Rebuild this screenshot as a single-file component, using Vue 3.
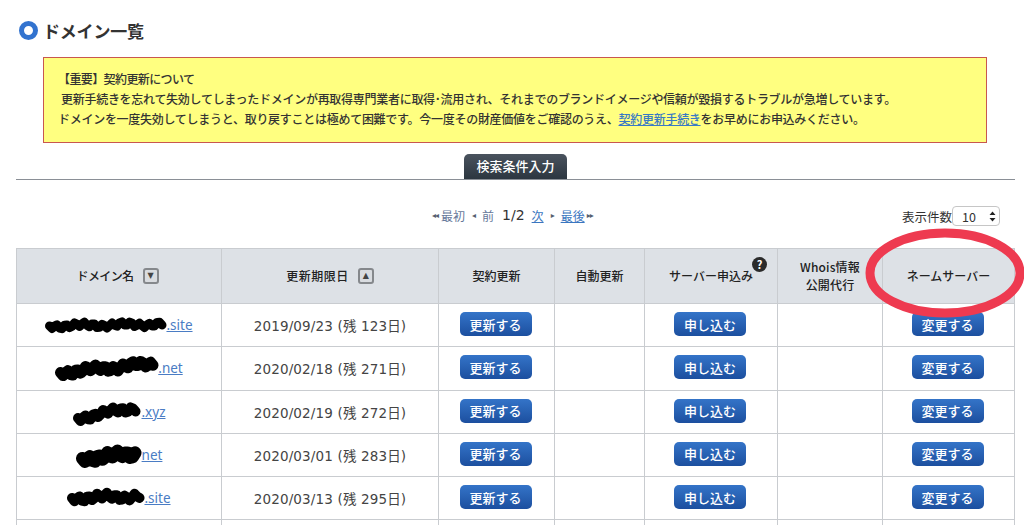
<template>
  <div class="page">
    <h1 class="title"><span class="title-mark"></span>ドメイン一覧</h1>

    <div class="notice">
      <p class="lead">【重要】契約更新について</p>
      <p class="indent">更新手続きを忘れて失効してしまったドメインが再取得専門業者に取得･流用され、それまでのブランドイメージや信頼が毀損するトラブルが急増しています。</p>
      <p>ドメインを一度失効してしまうと、取り戻すことは極めて困難です。今一度その財産価値をご確認のうえ、<a href="#">契約更新手続き</a>をお早めにお申込みください。</p>
    </div>

    <div class="tab-line">
      <div class="tab">検索条件入力</div>
    </div>

    <div class="pager-row">
      <div class="pager">
        <span class="arrow">◂◂</span>
        <span class="muted first">最初</span>
        <span class="arrow single">◂</span>
        <span class="muted prev">前</span>
        <span class="count">1/2</span>
        <a href="#" class="next">次</a>
        <span class="arrow single">▸</span>
        <a href="#" class="last">最後</a>
        <span class="arrow">▸▸</span>
      </div>
      <div class="per-page">
        <span>表示件数</span>
        <div class="select">10
          <svg width="7" height="11" viewBox="0 0 7 11"><path d="M3.5 0.5 6.5 4H.5zM3.5 10.5 .5 7h6z" fill="#222" /></svg>
        </div>
      </div>
    </div>

    <table class="domains">
      <colgroup>
        <col v-for="w in colWidths" :key="w.id" :style="{ width: w.px + 'px' }" />
      </colgroup>
      <thead>
        <tr>
          <th><span class="sortable first-sort"><span class="label-tight">ドメイン名</span><span class="sort">▼</span></span></th>
          <th><span class="sortable"><span class="label-wide">更新期限日</span><span class="sort">▲</span></span></th>
          <th>契約更新</th>
          <th>自動更新</th>
          <th class="help-cell">サーバー申込み<span class="help">?</span></th>
          <th class="whois">Whois情報<br />公開代行</th>
          <th>ネームサーバー</th>
        </tr>
      </thead>
      <tbody>
        <tr v-for="row in rows" :key="row.date">
          <td>
            <span class="domain">
              <svg class="scribble" :width="row.w" height="28" :viewBox="`0 0 ${row.w} 28`">
                <path :d="scribble(row)" fill="none" stroke="#000" :stroke-width="row.sw" stroke-linecap="round" stroke-linejoin="round" />
              </svg><a href="#">{{ row.tld }}</a>
            </span>
          </td>
          <td class="date">{{ row.date }} (残 {{ row.left }}日)</td>
          <td><button class="btn">更新する</button></td>
          <td></td>
          <td><button class="btn">申し込む</button></td>
          <td></td>
          <td><button class="btn">変更する</button></td>
        </tr>
        <tr class="cut">
          <td></td><td></td><td></td><td></td><td></td><td></td><td></td>
        </tr>
      </tbody>
    </table>

    <svg class="circle" width="170" height="100" viewBox="0 0 170 100">
      <ellipse cx="83" cy="48" rx="75" ry="40" fill="none" stroke="#ee3a50" stroke-width="9" />
    </svg>
  </div>
</template>

<script setup>
const colWidths = [
  { id: 'domain', px: 205 },
  { id: 'date', px: 217 },
  { id: 'renew', px: 116 },
  { id: 'auto', px: 90 },
  { id: 'server', px: 133 },
  { id: 'whois', px: 105 },
  { id: 'ns', px: 132 }
]

const rows = [
  { tld: '.site', date: '2019/09/23', left: 123, w: 122, y0: 15, y1: 13, amp: 3, sw: 9 },
  { tld: '.net', date: '2020/02/18', left: 271, w: 104, y0: 19, y1: 9, amp: 4, sw: 11 },
  { tld: '.xyz', date: '2020/02/19', left: 272, w: 70, y0: 21, y1: 8, amp: 4, sw: 10 },
  { tld: 'net', date: '2020/03/01', left: 283, w: 67, y0: 18, y1: 12, amp: 4, sw: 13 },
  { tld: '.site', date: '2020/03/13', left: 295, w: 78, y0: 14, y1: 12, amp: 4, sw: 10 }
]

// blotchy marker line over the hidden domain name
const scribble = (row) => {
  const pts = []
  for (let x = row.sw / 2, i = 0; x < row.w - row.sw / 2; x += 2.5, i++) {
    const base = row.y0 + ((row.y1 - row.y0) * x) / row.w
    const wobble = Math.sin(i * 1.7) * row.amp * 0.7 + Math.sin(i * 0.37) * row.amp * 0.4
    pts.push(`${x} ${(base + wobble).toFixed(1)}`)
  }
  return 'M' + pts.join(' L')
}
</script>

<style scoped>
.page {
  position: relative;
  width: 1024px;
  height: 525px;
  overflow: hidden;
  padding: 0 10px 0 16px;
  box-sizing: border-box;
  background: #fff;
  color: #333;
  font-family: "DejaVu Sans", "Noto Sans CJK JP", sans-serif;
  font-size: 13px;
}

.title {
  display: flex;
  align-items: center;
  gap: 5px;
  height: 22px;
  margin: 19px 0 16px 3px;
  font-family: "Noto Sans CJK JP", sans-serif;
  font-size: 17px;
  font-weight: 700;
  letter-spacing: -0.2px;
  color: #333;
}

.title-mark {
  width: 19px;
  height: 19px;
  box-sizing: border-box;
  border: 5px solid #3273cf;
  border-radius: 50%;
}

.notice {
  width: 944px;
  height: 86px;
  box-sizing: border-box;
  margin-left: 27px;
  padding: 11px 14px;
  background: #ffff80;
  border: 1px solid #c8574f;
  font-family: "Noto Sans CJK JP", sans-serif;
  font-size: 12px;
  line-height: 20px;
  font-weight: 500;
  letter-spacing: -0.28px;
  color: #333;
}

.notice p {
  margin: 0;
  white-space: nowrap;
}

.notice .indent {
  padding-left: 3px;
}

.notice .lead {
  letter-spacing: -0.6px;
}

.notice a {
  color: #3a7ac4;
}

.tab-line {
  display: flex;
  justify-content: center;
  width: 999px;
  margin-top: 11px;
  border-bottom: 1px solid #8a8f96;
}

.tab {
  width: 103px;
  height: 25px;
  box-sizing: border-box;
  padding-top: 2px;
  border-radius: 5px 5px 0 0;
  background: linear-gradient(#4a535e, #2c3640);
  color: #fff;
  font-family: "Noto Sans CJK JP", sans-serif;
  font-size: 13px;
  font-weight: 500;
  text-align: center;
}

.pager-row {
  display: flex;
  align-items: center;
  width: 984px;
  height: 20px;
  margin-top: 26px;
  margin-bottom: 22px;
}

.pager {
  display: flex;
  align-items: center;
  margin-left: 416px;
  margin-top: -2px;
  font-family: "Noto Sans CJK JP", sans-serif;
  font-size: 12px;
  color: #333;
  white-space: nowrap;
}

.pager a {
  color: #3a76c0;
}

.muted {
  color: #66789a;
}

.arrow {
  font-family: "DejaVu Sans", sans-serif;
  font-size: 8px;
  color: #555f70;
  letter-spacing: -1px;
}

.first {
  margin-left: 3px;
}

.arrow.single {
  margin: 0 7px;
}

.count {
  margin: 0 7px 0 8px;
  font-family: "DejaVu Sans", sans-serif;
  font-size: 14px;
}

.last {
  margin-right: 2px;
}

.per-page {
  display: flex;
  align-items: center;
  margin-left: auto;
  font-family: "Noto Sans CJK JP", sans-serif;
  font-size: 12.5px;
}

.select {
  display: flex;
  align-items: center;
  justify-content: space-between;
  width: 48px;
  height: 20px;
  box-sizing: border-box;
  padding: 0 3px 0 9px;
  background: #fff;
  border: 1px solid #c6c6c6;
  border-radius: 4px;
  font-size: 12.5px;
}

.domains {
  width: 998px;
  table-layout: fixed;
  border-collapse: collapse;
}

.domains th,
.domains td {
  border: 1px solid #c9ccd0;
  padding: 0;
  text-align: center;
}

.domains th {
  height: 54px;
  background: #dde1e6;
  font-family: "Noto Sans CJK JP", sans-serif;
  font-size: 12px;
  font-weight: 500;
  line-height: 18px;
  color: #222;
}

.domains td {
  height: 42.25px;
}

.domains .cut td {
  height: 30px;
}

.whois {
  padding-bottom: 6px;
  letter-spacing: 0.15px;
}

.sortable {
  display: inline-flex;
  align-items: center;
  gap: 9px;
}

.first-sort {
  margin-left: -3px;
}

.label-tight {
  letter-spacing: -0.6px;
}

.label-wide {
  letter-spacing: 0.5px;
}

.sort {
  display: flex;
  align-items: center;
  justify-content: center;
  width: 16px;
  height: 16px;
  box-sizing: border-box;
  border: 2px solid #85888c;
  border-radius: 3px;
  background: #d9dce0;
  font-family: "DejaVu Sans", sans-serif;
  font-size: 8px;
  color: #444;
}

.help-cell {
  position: relative;
}

.help {
  position: absolute;
  top: 8px;
  left: 107px;
  width: 15px;
  height: 15px;
  border-radius: 50%;
  background: #2b2b2b;
  color: #fff;
  font-size: 11px;
  font-weight: 700;
  line-height: 15px;
}

.domain {
  display: inline-flex;
  align-items: center;
  vertical-align: middle;
}

.domain a {
  margin-left: -1px;
  color: #4a7cc4;
  font-family: "Noto Sans", sans-serif;
  font-size: 13.5px;
}

.scribble {
  flex: none;
}

.date {
  color: #444;
  font-size: 13.5px;
  letter-spacing: 0.15px;
}

.btn {
  width: 72px;
  height: 24px;
  margin: -2px 0 0 -2px;
  padding: 0;
  border: 0;
  border-radius: 5px;
  background: linear-gradient(#3474c8, #1c4f9f);
  color: #fff;
  font-family: "Noto Sans CJK JP", sans-serif;
  font-size: 13px;
  font-weight: 500;
  vertical-align: middle;
}

.circle {
  position: absolute;
  left: 862px;
  top: 225px;
}
</style>
